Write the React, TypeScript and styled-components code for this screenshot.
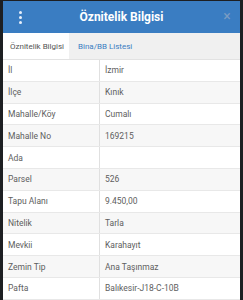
import React from "react";
import styled, { createGlobalStyle } from "styled-components";

const GlobalStyle = createGlobalStyle`
  html, body {
    margin: 0;
    padding: 0;
    background: #1d1f22;
    font-family: Roboto, "Noto Sans", sans-serif;
  }
`;

const rows: [string, string][] = [
  ["İl", "İzmir"],
  ["İlçe", "Kınık"],
  ["Mahalle/Köy", "Cumalı"],
  ["Mahalle No", "169215"],
  ["Ada", ""],
  ["Parsel", "526"],
  ["Tapu Alanı", "9.450,00"],
  ["Nitelik", "Tarla"],
  ["Mevkii", "Karahayıt"],
  ["Zemin Tip", "Ana Taşınmaz"],
  ["Pafta", "Balıkesir-J18-C-10B"],
];

const App = () => {
  return (
    <>
      <GlobalStyle />
      <Screen>
        <Panel>
          <Header>
            <Menu>
              <Dot />
              <Dot />
              <Dot />
            </Menu>
            <Title>Öznitelik Bilgisi</Title>
            <Close>×</Close>
          </Header>
          <Tabs>
            <Tab active>Öznitelik Bilgisi</Tab>
            <Tab>Bina/BB Listesi</Tab>
          </Tabs>
          <Table>
            {rows.map(([k, v], i) => (
              <Row key={k} striped={i % 2 === 1}>
                <Label>{k}</Label>
                <Value>{v}</Value>
              </Row>
            ))}
          </Table>
        </Panel>
      </Screen>
    </>
  );
};

export default App;

const Screen = styled.div`
  width: 243px;
  height: 300px;
  overflow: hidden;
  padding: 1px 3px 0 3px;
  box-sizing: border-box;
`;

const Panel = styled.div`
  width: 237px;
  height: 299px;
  background: #fff;
  display: flex;
  flex-direction: column;
  overflow: hidden;
`;

const Header = styled.div`
  height: 32px;
  flex-shrink: 0;
  background: #3a7dc2;
  display: flex;
  align-items: center;
`;

const Menu = styled.div`
  width: 32px;
  padding-left: 2px;
  box-sizing: border-box;
  display: flex;
  flex-direction: column;
  align-items: center;
  gap: 2px;
`;

const Dot = styled.span`
  width: 3px;
  height: 3px;
  border-radius: 50%;
  background: #e8f0fa;
`;

const Title = styled.div`
  flex: 1;
  text-align: center;
  color: #fff;
  font-size: 12px;
  font-weight: 700;
  margin-right: 6px;
`;

const Close = styled.div`
  width: 26px;
  color: #7a9cc2;
  font-size: 14px;
  text-align: center;
  margin-top: -2px;
`;

const Tabs = styled.div`
  height: 27px;
  flex-shrink: 0;
  background: #f0f0f0;
  display: flex;
  border-bottom: 1px solid #e2e2e2;
  box-sizing: border-box;
`;

const Tab = styled.div<{ active?: boolean }>`
  display: flex;
  align-items: center;
  padding: 0 ${(p) => (p.active ? "5px" : "9px")} 0 ${(p) => (p.active ? "7px" : "9px")};
  font-size: 8px;
  background: ${(p) => (p.active ? "#fff" : "transparent")};
  color: ${(p) => (p.active ? "#555" : "#3a7dc2")};
`;

const Table = styled.div`
  display: flex;
  flex-direction: column;
`;

const Row = styled.div<{ striped?: boolean }>`
  height: 21.8px;
  flex-shrink: 0;
  display: grid;
  grid-template-columns: 97px 1fr;
  background: ${(p) => (p.striped ? "#f7f7f7" : "#fff")};
  border-bottom: 1px solid #e8e8e8;
  box-sizing: border-box;
  font-size: 8.5px;
  color: #5e5e5e;
`;

const Label = styled.div`
  display: flex;
  align-items: center;
  padding-left: 5px;
  border-right: 1px solid #e0e0e0;
`;

const Value = styled.div`
  display: flex;
  align-items: center;
  padding-left: 5px;
`;
